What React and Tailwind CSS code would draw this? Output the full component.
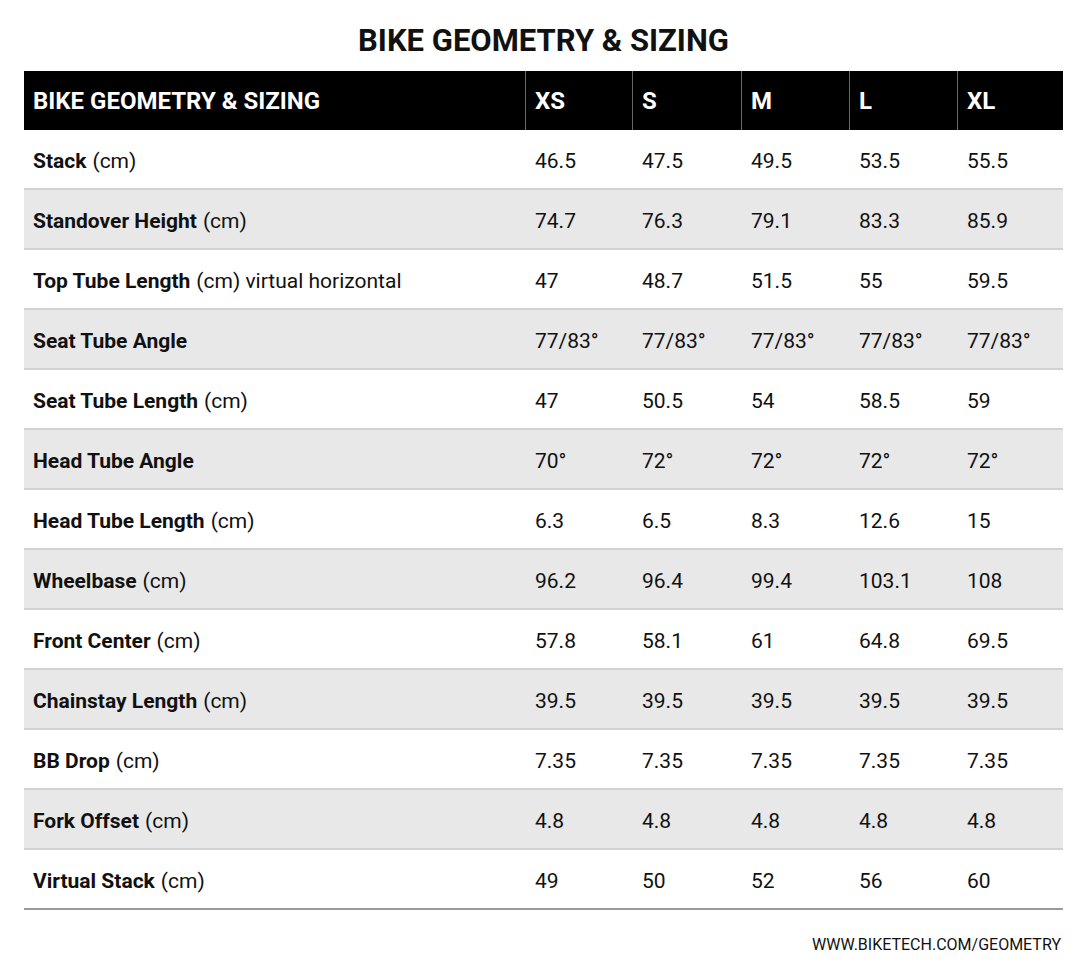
const sizes = ['XS', 'S', 'M', 'L', 'XL'];

const rows = [
  { name: 'Stack', unit: '(cm)', values: ['46.5', '47.5', '49.5', '53.5', '55.5'] },
  { name: 'Standover Height', unit: '(cm)', values: ['74.7', '76.3', '79.1', '83.3', '85.9'] },
  { name: 'Top Tube Length', unit: '(cm) virtual horizontal', values: ['47', '48.7', '51.5', '55', '59.5'] },
  { name: 'Seat Tube Angle', unit: '', values: ['77/83°', '77/83°', '77/83°', '77/83°', '77/83°'] },
  { name: 'Seat Tube Length', unit: '(cm)', values: ['47', '50.5', '54', '58.5', '59'] },
  { name: 'Head Tube Angle', unit: '', values: ['70°', '72°', '72°', '72°', '72°'] },
  { name: 'Head Tube Length', unit: '(cm)', values: ['6.3', '6.5', '8.3', '12.6', '15'] },
  { name: 'Wheelbase', unit: '(cm)', values: ['96.2', '96.4', '99.4', '103.1', '108'] },
  { name: 'Front Center', unit: '(cm)', values: ['57.8', '58.1', '61', '64.8', '69.5'] },
  { name: 'Chainstay Length', unit: '(cm)', values: ['39.5', '39.5', '39.5', '39.5', '39.5'] },
  { name: 'BB Drop', unit: '(cm)', values: ['7.35', '7.35', '7.35', '7.35', '7.35'] },
  { name: 'Fork Offset', unit: '(cm)', values: ['4.8', '4.8', '4.8', '4.8', '4.8'] },
  { name: 'Virtual Stack', unit: '(cm)', values: ['49', '50', '52', '56', '60'] },
];

export default function App() {
  return (
    <div className="w-[1079px] h-[976px] bg-white text-[#111] font-['Roboto',sans-serif] pl-[24px] pr-[16px]">
      <h1 className="h-[71px] flex items-center justify-center pt-[12px] text-[31px] font-bold">
        BIKE GEOMETRY &amp; SIZING
      </h1>

      <div className="grid grid-cols-[501px_107px_109px_108px_108px_1fr] h-[59px] bg-black text-white text-[24px] font-bold">
        <div className="flex items-center pl-[9px]">BIKE GEOMETRY &amp; SIZING</div>
        {sizes.map((s) => (
          <div key={s} className="flex items-center pl-[9px] border-l border-[#666]">{s}</div>
        ))}
      </div>

      {rows.map((r, i) => (
        <div
          key={r.name}
          className={`grid grid-cols-[501px_107px_109px_108px_108px_1fr] h-[60px] text-[21px] ${
            i % 2 === 1 ? 'bg-[#e8e8e8]' : 'bg-white'
          } ${i === rows.length - 1 ? 'border-b-2 border-[#9a9a9a]' : 'border-b-2 border-[#d2d2d2]'}`}
        >
          <div className="flex items-center pl-[9px] pt-[5px]">
            <span className="font-bold">{r.name}</span>
            {r.unit && <span className="ml-[6px]">{r.unit}</span>}
          </div>
          {r.values.map((v, j) => (
            <div key={j} className="flex items-center pl-[10px] pt-[5px]">{v}</div>
          ))}
        </div>
      ))}

      <div className="flex justify-end pt-[23px] pr-[2px] text-[16px]">
        WWW.BIKETECH.COM/GEOMETRY
      </div>
    </div>
  );
}
